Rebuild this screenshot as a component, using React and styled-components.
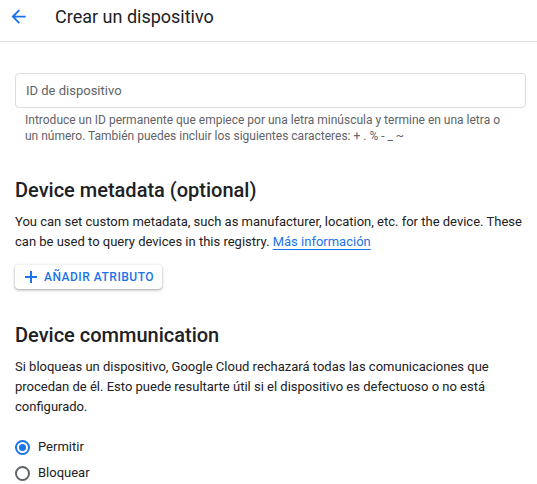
import React from 'react';
import styled, { createGlobalStyle } from 'styled-components';

const GlobalStyle = createGlobalStyle`
  body {
    margin: 0;
    background: #fff;
    font-family: Roboto, "Liberation Sans", Arial, sans-serif;
    color: #202124;
  }
`;

const Header = styled.header`
  height: 41px;
  display: flex;
  align-items: center;
  border-bottom: 1px solid #dadce0;
`;

const BackButton = styled.button`
  width: 38px;
  height: 38px;
  margin-right: 17px;
  border: none;
  background: transparent;
  padding: 0;
  display: flex;
  align-items: center;
  justify-content: center;
  cursor: pointer;
  margin-top: -8px;
`;

const Title = styled.h1`
  margin: 0;
  margin-top: -8px;
  font-size: 18px;
  font-weight: 400;
  color: #202124;
`;

const Main = styled.main`
  padding: 0 11px 0 15px;
`;

const Field = styled.div`
  margin-top: 31px;
`;

const Input = styled.input`
  box-sizing: border-box;
  width: 100%;
  height: 35px;
  border: 1px solid #dadce0;
  border-radius: 4px;
  padding: 0 10px;
  font-family: inherit;
  font-size: 13px;
  color: #202124;
  outline: none;
  &::placeholder {
    color: #5f6368;
  }
`;

const Hint = styled.p`
  margin: 4px 16px 0 10px;
  font-size: 12px;
  line-height: 16px;
  color: #5f6368;
`;

const Section = styled.section`
  margin-top: ${p => p.$top}px;
`;

const Heading = styled.h2`
  margin: 0;
  font-size: 20px;
  font-weight: 500;
  line-height: 24px;
  color: #202124;
`;

const Text = styled.p`
  margin: 10px 0 0;
  font-size: 13px;
  line-height: 20px;
  color: #202124;
`;

const Link = styled.a`
  color: #1a73e8;
  text-decoration: underline;
  text-underline-offset: 3px;
`;

const AddButton = styled.button`
  margin-top: 13px;
  height: 24px;
  display: inline-flex;
  align-items: center;
  gap: 7px;
  padding: 0 8px 0 10px;
  border: none;
  border-radius: 4px;
  background: #fff;
  box-shadow: 0 1px 2px rgba(60, 64, 67, 0.3), 0 1px 3px 1px rgba(60, 64, 67, 0.15);
  font-family: inherit;
  font-size: 12px;
  font-weight: 500;
  letter-spacing: 0.5px;
  color: #1a73e8;
  cursor: pointer;
`;

const RadioGroup = styled.div`
  margin-top: 21px;
  display: flex;
  flex-direction: column;
  gap: 8px;
`;

const RadioLabel = styled.label`
  display: flex;
  align-items: center;
  gap: 8px;
  font-size: 13px;
  line-height: 18px;
  color: #202124;
`;

const RadioCircle = styled.span`
  box-sizing: border-box;
  width: 15px;
  height: 15px;
  border-radius: 50%;
  border: 2px solid ${p => (p.$checked ? '#1a73e8' : '#5f6368')};
  display: flex;
  align-items: center;
  justify-content: center;
  &::after {
    content: '';
    width: 7px;
    height: 7px;
    border-radius: 50%;
    background: ${p => (p.$checked ? '#1a73e8' : 'transparent')};
  }
`;

const Radio = ({ checked, children }) => (
  <RadioLabel>
    <RadioCircle $checked={checked} />
    {children}
  </RadioLabel>
);

const App = () => {
  return (
    <>
      <GlobalStyle />
      <Header>
        <BackButton aria-label="Atrás">
          <svg width="16" height="16" viewBox="0 0 16 16">
            <path d="M15 7H3.8l5.1-5.1L7.5.5 0 8l7.5 7.5 1.4-1.4L3.8 9H15z" fill="#1a73e8" transform="translate(0.5 0) scale(0.95)" />
          </svg>
        </BackButton>
        <Title>Crear un dispositivo</Title>
      </Header>
      <Main>
        <Field>
          <Input placeholder="ID de dispositivo" />
          <Hint>
            Introduce un ID permanente que empiece por una letra minúscula y termine en una letra o
            un número. También puedes incluir los siguientes caracteres: + . % - _ ~
          </Hint>
        </Field>

        <Section $top={34}>
          <Heading>Device metadata (optional)</Heading>
          <Text>
            You can set custom metadata, such as manufacturer, location, etc. for the device. These
            can be used to query devices in this registry. <Link href="#">Más información</Link>
          </Text>
          <AddButton>
            <svg width="12" height="12" viewBox="0 0 12 12">
              <path d="M5 0h2v5h5v2H7v5H5V7H0V5h5z" fill="#1a73e8" />
            </svg>
            AÑADIR ATRIBUTO
          </AddButton>
        </Section>

        <Section $top={34}>
          <Heading>Device communication</Heading>
          <Text>
            Si bloqueas un dispositivo, Google Cloud rechazará todas las comunicaciones que
            procedan de él. Esto puede resultarte útil si el dispositivo es defectuoso o no está
            configurado.
          </Text>
          <RadioGroup>
            <Radio checked>Permitir</Radio>
            <Radio>Bloquear</Radio>
          </RadioGroup>
        </Section>
      </Main>
    </>
  );
};

export default App;
